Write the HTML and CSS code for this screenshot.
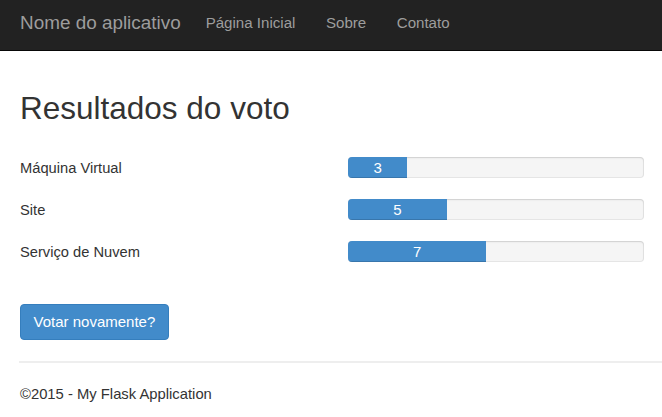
FILE: index.html
```html
<!DOCTYPE html>
<html lang="pt">
<head>
<meta charset="utf-8">
<title>Resultados do voto</title>
<link rel="stylesheet" href="styles.css">
</head>
<body>
<nav class="navbar">
  <a class="brand" href="#">Nome do aplicativo</a>
  <ul class="nav">
    <li><a href="#">Página Inicial</a></li>
    <li><a href="#">Sobre</a></li>
    <li><a href="#">Contato</a></li>
  </ul>
</nav>
<main class="page">
  <div class="content">
    <h1 class="title">Resultados do voto</h1>
    <div class="results">
      <div class="label">Máquina Virtual</div>
      <div class="progress"><div class="bar" style="width: 20%">3</div></div>
      <div class="label">Site</div>
      <div class="progress"><div class="bar" style="width: 33.333%">5</div></div>
      <div class="label">Serviço de Nuvem</div>
      <div class="progress"><div class="bar" style="width: 46.667%">7</div></div>
    </div>
    <button class="btn" type="button">Votar novamente?</button>
  </div>
  <hr class="rule">
  <footer class="footer">©2015 - My Flask Application</footer>
</main>
</body>
</html>
```
FILE: styles.css
```css
* { box-sizing: border-box; }
html, body { margin: 0; padding: 0; }
body {
  font-family: "Liberation Sans", Arial, sans-serif;
  font-size: 14.7px;
  color: #333333;
  background: #ffffff;
}
.navbar {
  height: 51px;
  background: #222222;
  border-bottom: 1px solid #080808;
  display: flex;
  align-items: center;
  padding-left: 20px;
}
.brand {
  color: #9d9d9d;
  text-decoration: none;
  font-size: 18.9px;
  line-height: 22px;
  margin-right: 25px;
  margin-top: -4px;
}
.nav {
  list-style: none;
  margin: -5px 0 0;
  padding: 0;
  display: flex;
  gap: 30.5px;
}
.nav a {
  color: #9d9d9d;
  text-decoration: none;
  font-size: 15.1px;
  line-height: 20px;
}
.page {
  padding-left: 20px;
}
.content {
  padding-right: 18px;
}
.title {
  margin: 40px 0 0;
  font-size: 31.5px;
  font-weight: normal;
  line-height: 34px;
  color: #333333;
}
.results {
  margin-top: 32px;
  display: grid;
  grid-template-columns: 1fr 1fr;
  grid-auto-rows: 21px;
  column-gap: 32px;
  row-gap: 21px;
}
.label {
  line-height: 21px;
  padding-top: 1px;
  white-space: nowrap;
}
.progress {
  height: 21px;
  background: #f5f5f5;
  border-radius: 4px;
  overflow: hidden;
  box-shadow: inset 0 1px 2px rgba(0,0,0,0.1), inset 0 0 0 1px rgba(0,0,0,0.06);
}
.bar {
  height: 100%;
  background: #428bca;
  color: #ffffff;
  text-align: center;
  font-size: 15px;
  line-height: 21px;
  box-shadow: inset 0 -1px 0 rgba(0,0,0,0.15);
}
.btn {
  margin-top: 42px;
  height: 36px;
  padding: 0 12.5px;
  font-family: inherit;
  font-size: 15px;
  line-height: 34px;
  color: #ffffff;
  background: #428bca;
  border: 1px solid #357ebd;
  border-radius: 4px;
  cursor: pointer;
  display: block;
}
.rule {
  margin: 21px 0 0 -1px;
  border: 0;
  border-top: 2px solid #eeeeee;
  height: 0;
}
.footer {
  margin-top: 21px;
  line-height: 21px;
  font-size: 14.8px;
}
```
